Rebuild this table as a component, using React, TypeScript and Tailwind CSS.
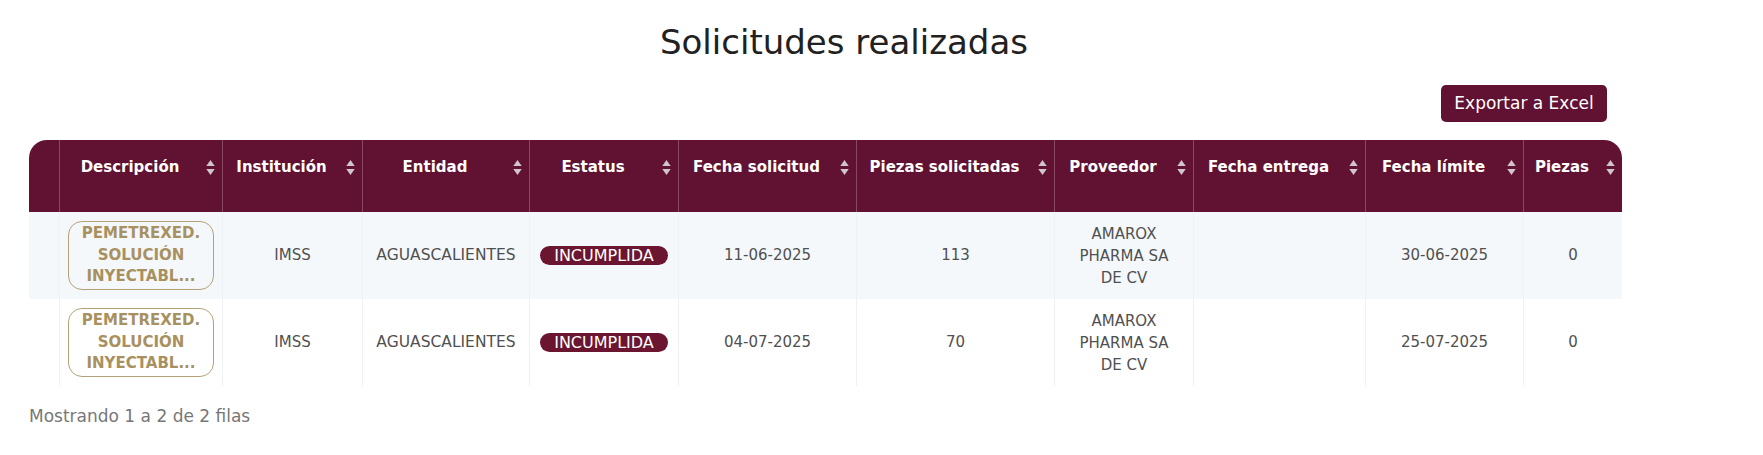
import React from "react";

const cols = [31, 163, 140, 167, 149, 178, 198, 139, 172, 158, 98];
const headers = [
  "",
  "Descripción",
  "Institución",
  "Entidad",
  "Estatus",
  "Fecha solicitud",
  "Piezas solicitadas",
  "Proveedor",
  "Fecha entrega",
  "Fecha límite",
  "Piezas",
];

const rows = [
  { fecha: "11-06-2025", piezas: "113", limite: "30-06-2025", bg: "bg-[#f5f8fb]" },
  { fecha: "04-07-2025", piezas: "70", limite: "25-07-2025", bg: "bg-white" },
];

function SortIcon() {
  return (
    <svg width="9" height="17" viewBox="0 0 9 17" className="block">
      <path d="M4.5 1 L8.7 7 L0.3 7 Z" fill="#cfc6ca" />
      <path d="M0.3 10 L8.7 10 L4.5 16 Z" fill="#cfc6ca" />
    </svg>
  );
}

export default function App() {
  return (
    <div className="w-[1763px] h-[455px] bg-white font-['DejaVu_Sans',sans-serif] overflow-hidden">
      <div className="ml-[29px] w-[1630px] pt-[22px]">
        <h1 className="text-center text-[34px] leading-[40px] text-[#212121] font-normal">
          Solicitudes realizadas
        </h1>
        <div className="flex justify-end pr-[52px] mt-[23px]">
          <button className="h-[37px] w-[166px] rounded-[5px] bg-[#611232] text-white text-[17px] leading-[37px]">
            Exportar a Excel
          </button>
        </div>
        <table className="mt-[18px] table-fixed border-separate border-spacing-0 w-[1593px]">
          <colgroup>
            {cols.map((w, i) => (
              <col key={i} style={{ width: w }} />
            ))}
          </colgroup>
          <thead>
            <tr>
              {headers.map((h, i) => (
                <th
                  key={i}
                  className={`h-[72px] p-0 align-top bg-[#611232] text-white font-bold text-[15px] leading-[24px] ${
                    i < headers.length - 1 ? "border-r border-[#874a61]" : ""
                  } ${i === 0 ? "rounded-tl-[18px]" : ""} ${
                    i === headers.length - 1 ? "rounded-tr-[18px]" : ""
                  }`}
                >
                  {h && (
                    <div className="flex pt-[15px] pl-[8px] pr-[7px]">
                      <span className="flex-1 text-center whitespace-nowrap">{h}</span>
                      <span className="w-[23px] flex justify-end items-center h-[24px]">
                        <SortIcon />
                      </span>
                    </div>
                  )}
                </th>
              ))}
            </tr>
          </thead>
          <tbody>
            {rows.map((r, ri) => (
              <tr key={ri} className={r.bg}>
                <td className="h-[87px] border-r border-[#eff2f5]"></td>
                <td className="border-r border-[#eff2f5] align-middle">
                  <div className="mx-auto w-[146px] rounded-[14px] border-[1.5px] border-[#b5a177] py-px text-center text-[15px] leading-[21.5px] font-bold text-[#a8915f]">
                    <div>PEMETREXED.</div>
                    <div>SOLUCIÓN</div>
                    <div>INYECTABL...</div>
                  </div>
                </td>
                <td className="border-r border-[#eff2f5] text-center text-[15px] text-[#505050]">IMSS</td>
                <td className="border-r border-[#eff2f5] text-center text-[15.5px] text-[#505050]">AGUASCALIENTES</td>
                <td className="border-r border-[#eff2f5] text-center">
                  <span className="inline-block rounded-full bg-[#6b1530] px-[14px] text-white text-[16px] leading-[19px]">
                    INCUMPLIDA
                  </span>
                </td>
                <td className="border-r border-[#eff2f5] text-center text-[15px] text-[#505050]">{r.fecha}</td>
                <td className="border-r border-[#eff2f5] text-center text-[15px] text-[#505050]">{r.piezas}</td>
                <td className="border-r border-[#eff2f5] text-center text-[15px] leading-[22px] text-[#505050]">
                  <div>AMAROX</div>
                  <div>PHARMA SA</div>
                  <div>DE CV</div>
                </td>
                <td className="border-r border-[#eff2f5]"></td>
                <td className="border-r border-[#eff2f5] text-center text-[15px] text-[#505050]">{r.limite}</td>
                <td className="text-center text-[15px] text-[#505050]">0</td>
              </tr>
            ))}
          </tbody>
        </table>
        <div className="mt-[18px] text-[17px] leading-[24px] text-[#777777]">
          Mostrando 1 a 2 de 2 filas
        </div>
      </div>
    </div>
  );
}
